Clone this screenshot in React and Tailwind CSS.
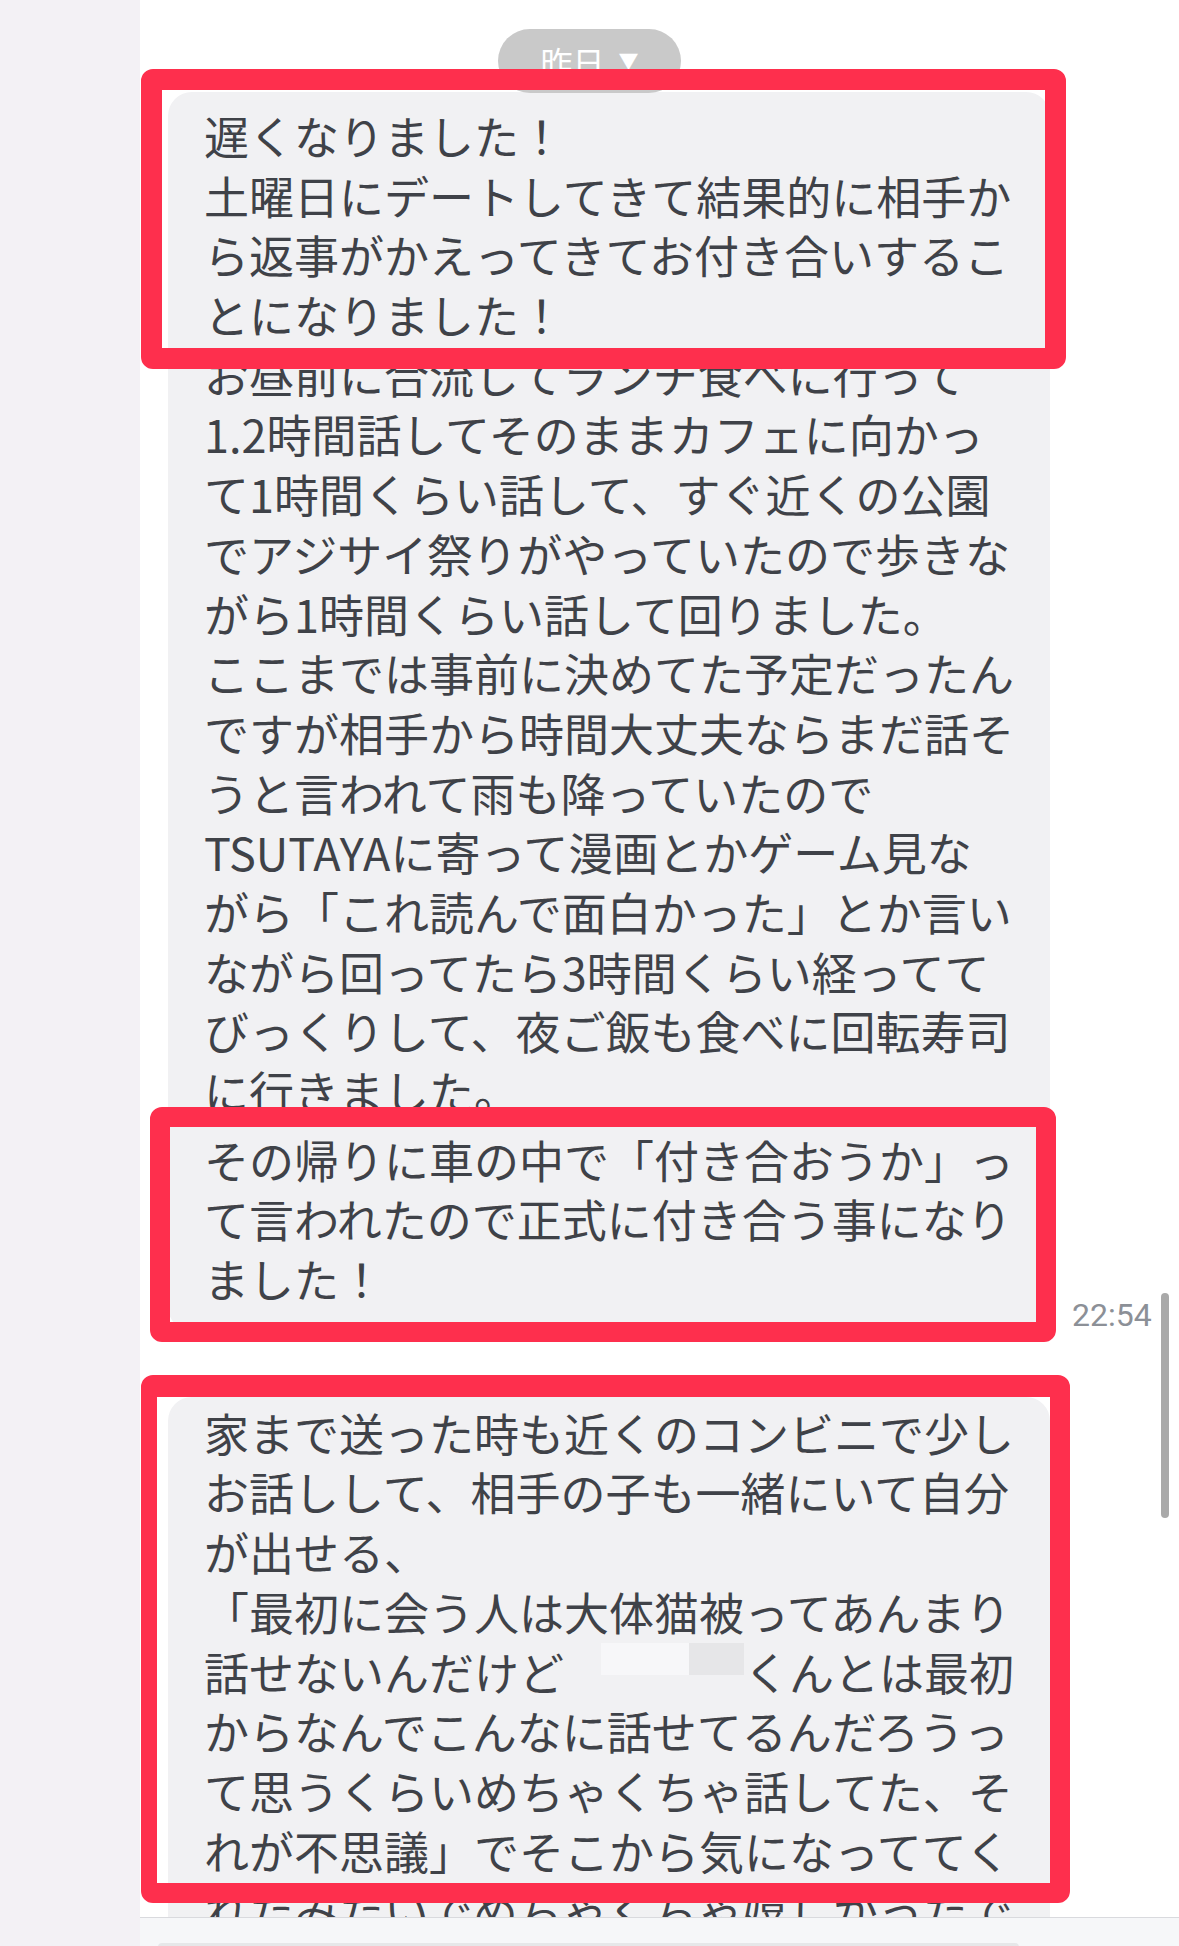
const linesA = [
  "遅くなりました！",
  "土曜日にデートしてきて結果的に相手か",
  "ら返事がかえってきてお付き合いするこ",
  "とになりました！",
  "お昼前に合流してランチ食べに行って",
  "1.2時間話してそのままカフェに向かっ",
  "て1時間くらい話して、すぐ近くの公園",
  "でアジサイ祭りがやっていたので歩きな",
  "がら1時間くらい話して回りました。",
  "ここまでは事前に決めてた予定だったん",
  "ですが相手から時間大丈夫ならまだ話そ",
  "うと言われて雨も降っていたので",
  "TSUTAYAに寄って漫画とかゲーム見な",
  "がら「これ読んで面白かった」とか言い",
  "ながら回ってたら3時間くらい経ってて",
  "びっくりして、夜ご飯も食べに回転寿司",
  "に行きました。",
];

const linesB = [
  "その帰りに車の中で「付き合おうか」っ",
  "て言われたので正式に付き合う事になり",
  "ました！",
];

function Line({ children }) {
  return <div className="h-[59.7px] whitespace-nowrap">{children}</div>;
}

function Redacted() {
  return (
    <span className="inline-flex h-[59.7px] w-[180px] align-top">
      <span className="ml-[37px] mt-[1px] h-[32px] w-[88px] bg-[#f7f7f9]" />
      <span className="mt-[1px] h-[32px] w-[55px] bg-[#e6e6e8]" />
    </span>
  );
}

function RedBox({ className }) {
  return (
    <div
      className={
        "pointer-events-none absolute rounded-[12px] border-[20px] border-[#fe2f4d] " + className
      }
    />
  );
}

export default function App() {
  return (
    <div className="relative flex h-[1946px] w-[1179px] overflow-hidden bg-white font-['Noto_Sans_CJK_JP','Noto_Sans',sans-serif] text-[45px] leading-[59.7px] text-[#3f4248]">
      <div className="w-[140px] shrink-0 bg-[#f3f1f5]" />

      <div className="relative flex flex-1 flex-col">
        <div className="relative flex-1 overflow-hidden">
          <div className="pl-[28px] pt-[92px]">
            <div className="w-[882px] rounded-t-[24px] bg-[#f1f1f3] pl-[36px] pt-[14px]">
              {linesA.map((t) => (
                <Line key={t}>{t}</Line>
              ))}
            </div>

            <div className="flex items-end">
              <div className="w-[882px] rounded-b-[24px] bg-[#f1f1f3] pb-[22px] pl-[36px] pt-[9px]">
                {linesB.map((t) => (
                  <Line key={t}>{t}</Line>
                ))}
              </div>
              <div className="mb-[-2px] ml-[22px] font-['Roboto',sans-serif] text-[32px] leading-[36px] text-[#8c9097]">
                22:54
              </div>
            </div>

            <div className="mt-[66px] w-[882px] rounded-[24px] bg-[#f1f1f3] pb-[20px] pl-[36px] pt-[6px] leading-[60.6px]">
              <Line>家まで送った時も近くのコンビニで少し</Line>
              <Line>お話しして、相手の子も一緒にいて自分</Line>
              <Line>が出せる、</Line>
              <Line>「最初に会う人は大体猫被ってあんまり</Line>
              <Line>
                話せないんだけど
                <Redacted />
                くんとは最初
              </Line>
              <Line>からなんでこんなに話せてるんだろうっ</Line>
              <Line>て思うくらいめちゃくちゃ話してた、そ</Line>
              <Line>れが不思議」でそこから気になっててく</Line>
              <Line>れたみたいでめちゃくちゃ嬉しかったで</Line>
            </div>
          </div>

          {/* date header */}
          <div className="absolute left-[358px] top-[29px] flex h-[64px] w-[183px] items-center justify-center gap-[14px] rounded-full bg-[#c9c9c9] text-[32px] leading-none text-white">
            <span>昨日</span>
            <span className="text-[20px]">▼</span>
          </div>

          {/* highlight boxes */}
          <RedBox className="left-[1px] top-[69px] h-[300px] w-[925px] border-[21px]" />
          <RedBox className="left-[10px] top-[1107px] h-[235px] w-[906px]" />
          <RedBox className="left-[1px] top-[1375px] h-[528px] w-[929px] border-l-[16px] border-t-[22px]" />

          {/* scrollbar */}
          <div className="absolute left-[1021px] top-[1293px] h-[225px] w-[8px] rounded-full bg-[#a9a9a9]" />
        </div>

        <div className="h-[29px] shrink-0 border-t border-[#d9dade] bg-[#f6f7f9] pl-[18px] pt-[25px]">
          <div className="h-[4px] w-[861px] rounded-t-[12px] bg-[#e6e7e9]" />
        </div>
      </div>
    </div>
  );
}
